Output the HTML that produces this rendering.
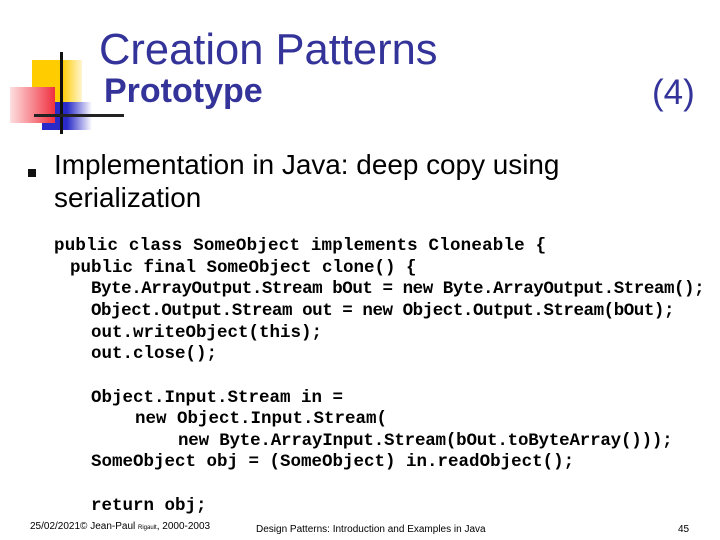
<!DOCTYPE html>
<html><head><style>
body{margin:0;width:720px;height:540px;background:#fff;position:relative;overflow:hidden;font-family:"Liberation Sans",sans-serif}
.a{position:absolute}
.c{position:absolute;margin:0;font-family:"Liberation Mono",monospace;font-size:17.5px;line-height:20px;font-weight:bold;color:#000;white-space:pre}
</style></head><body>
<div class="a" style="left:32px;top:60px;width:50px;height:42px;background:linear-gradient(90deg,#ffcc00 60%,#fff5d0)"></div>
<div class="a" style="left:42px;top:102px;width:50px;height:28px;background:linear-gradient(90deg,#2a2ac8 50%,#fff)"></div>
<div class="a" style="left:10px;top:87px;width:45px;height:36px;background:linear-gradient(90deg,#fde0e0,#f03040)"></div>
<div class="a" style="left:60px;top:52px;width:3px;height:82px;background:#111"></div>
<div class="a" style="left:34px;top:114px;width:90px;height:3px;background:#222"></div>
<div class="a" style="left:99px;top:26px;font-size:43.5px;color:#333399;white-space:nowrap">Creation Patterns</div>
<div class="a" style="left:104px;top:72px;font-size:34px;font-weight:bold;color:#333399">Prototype</div>
<div class="a" style="left:652px;top:73px;font-size:35px;color:#333399">(4)</div>
<div class="a" style="left:28px;top:169px;width:8px;height:8px;background:#111"></div>
<div class="a" style="left:54px;top:148px;font-size:27.9px;line-height:33px;color:#000;white-space:nowrap">Implementation in Java: deep copy using<br>serialization</div>
<div class="c" style="left:54px;top:236px;letter-spacing:0.2px">public class SomeObject implements Cloneable {</div>
<div class="c" style="left:70px;top:258px">public final SomeObject clone() {</div>
<div class="c" style="left:91px;top:279px;letter-spacing:-0.45px">Byte.ArrayOutput.Stream bOut = new Byte.ArrayOutput.Stream();</div>
<div class="c" style="left:91px;top:301px;letter-spacing:-0.45px">Object.Output.Stream out = new Object.Output.Stream(bOut);</div>
<div class="c" style="left:91px;top:323px">out.writeObject(this);</div>
<div class="c" style="left:91px;top:344px">out.close();</div>
<div class="c" style="left:91px;top:388px">Object.Input.Stream in =</div>
<div class="c" style="left:135px;top:409px">new Object.Input.Stream(</div>
<div class="c" style="left:178px;top:431px;letter-spacing:-0.2px">new Byte.ArrayInput.Stream(bOut.toByteArray()));</div>
<div class="c" style="left:91px;top:452px">SomeObject obj = (SomeObject) in.readObject();</div>
<div class="c" style="left:91px;top:496px">return obj;</div>
<div class="a" style="left:30px;top:521px;font-size:10px;white-space:nowrap">25/02/2021© Jean-Paul <span style="font-size:6px">Rigault</span>, 2000-2003</div>
<div class="a" style="left:256px;top:524px;font-size:10px;white-space:nowrap">Design Patterns: Introduction and Examples in Java</div>
<div class="a" style="left:678px;top:524px;font-size:10px">45</div>
</body></html>
